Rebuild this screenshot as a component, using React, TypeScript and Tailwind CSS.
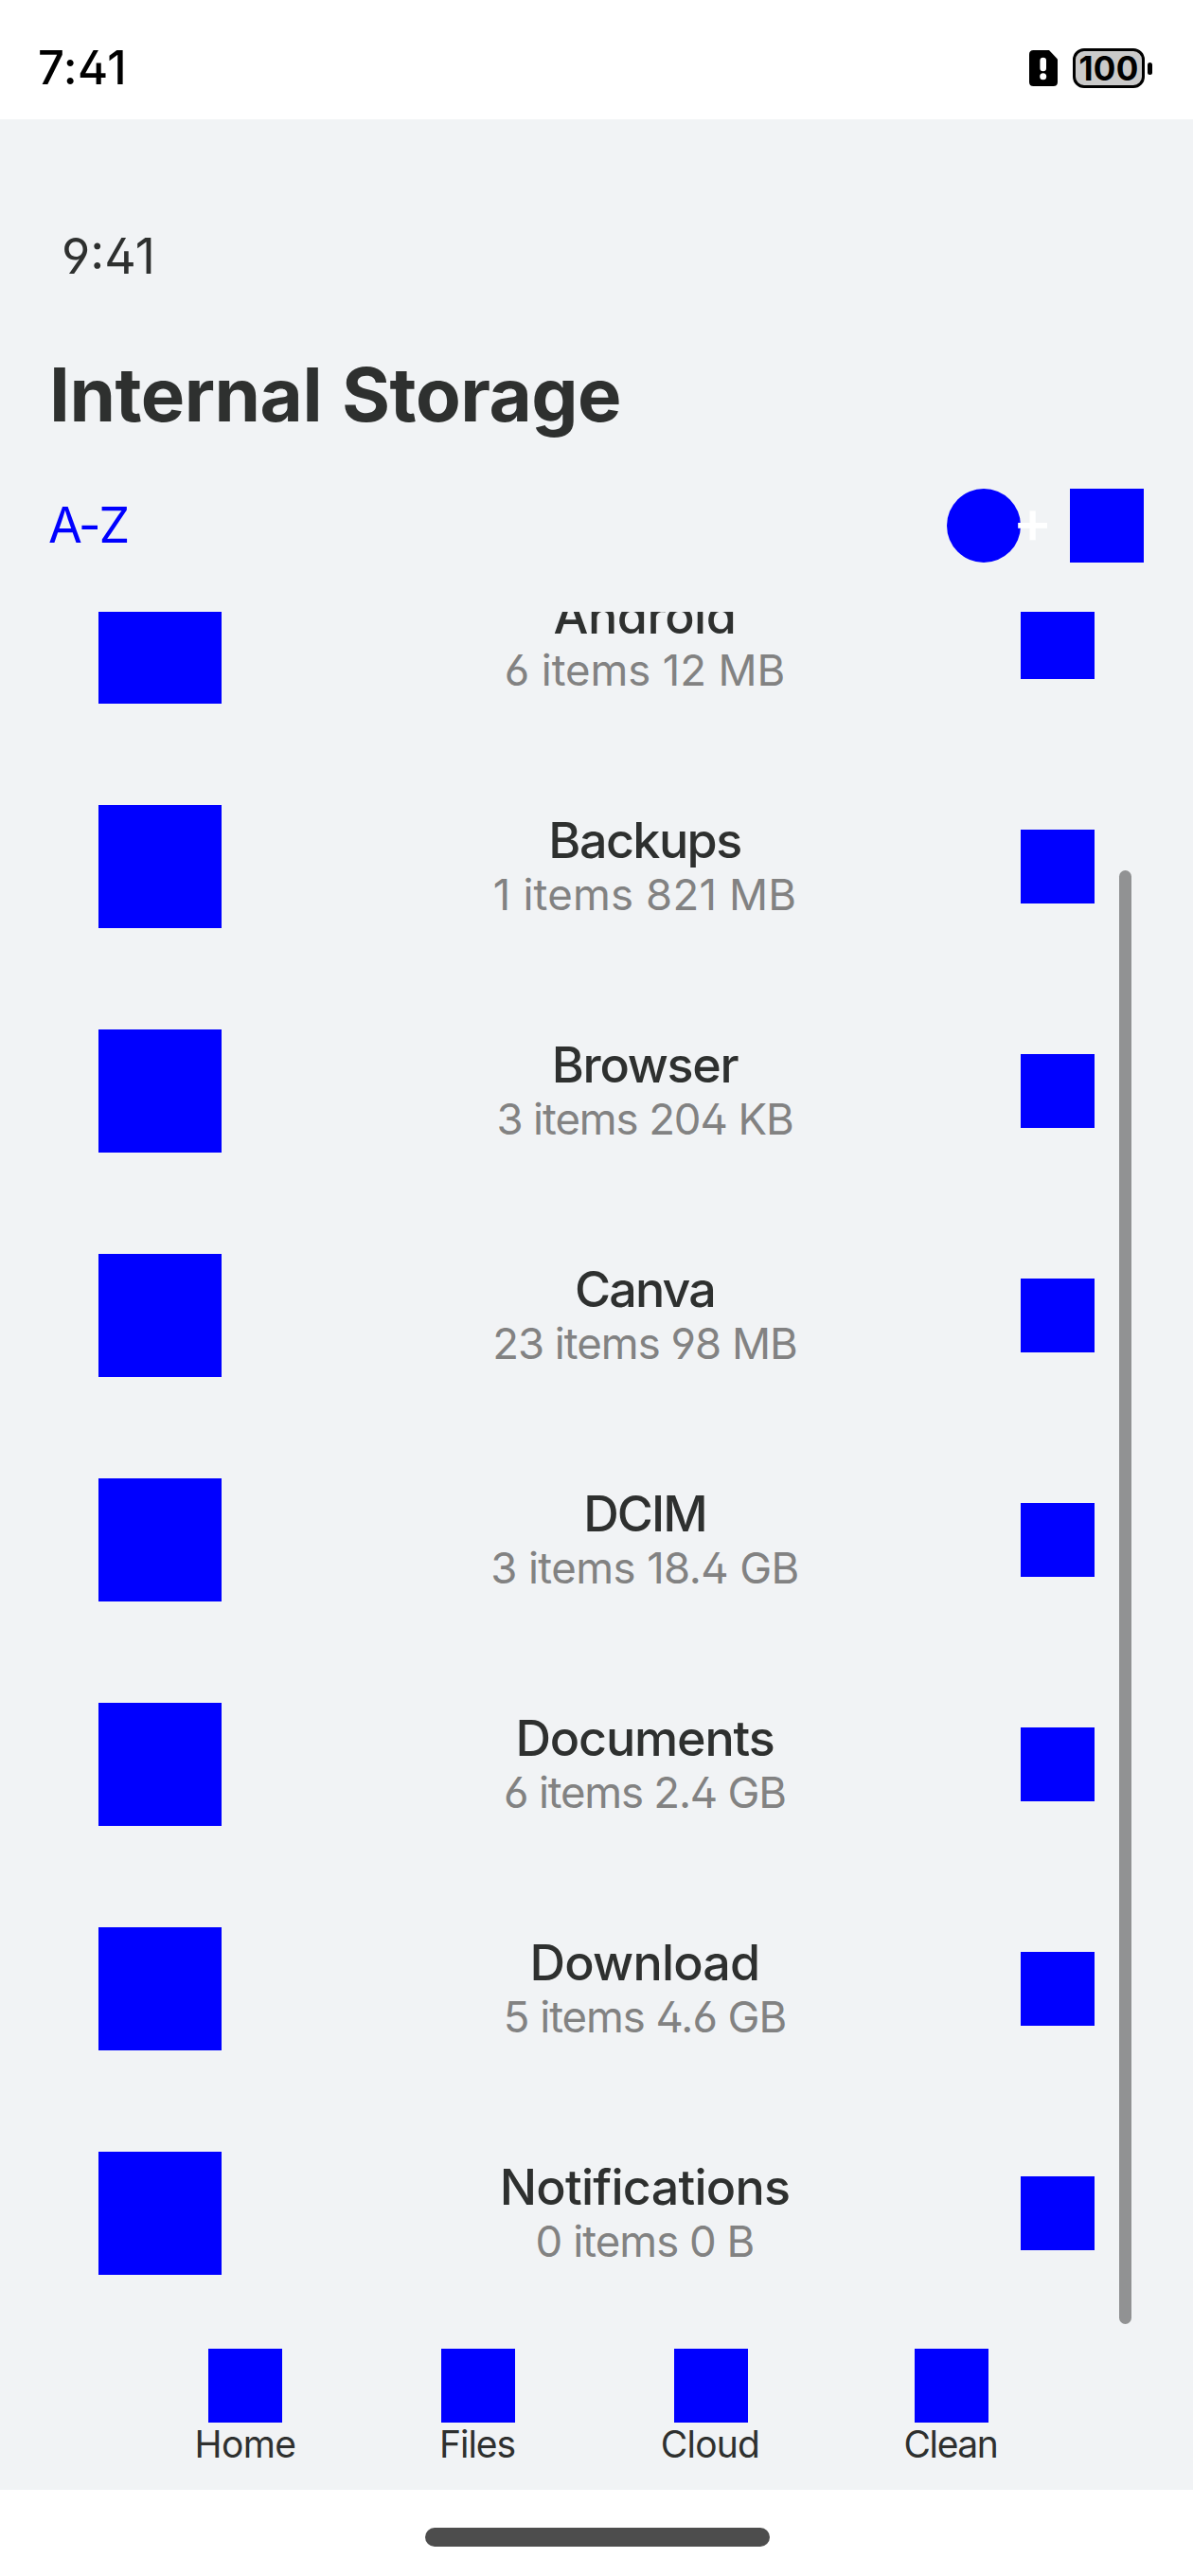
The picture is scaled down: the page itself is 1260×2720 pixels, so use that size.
type Entry = { name: string; nameFit: string; detail: string; detailFit: string };

const entries: Entry[] = [
  { name: "Android", nameFit: "tracking-[-0.45px]", detail: "6 items 12 MB", detailFit: "tracking-[-0.1px]" },
  { name: "Backups", nameFit: "tracking-[-1.55px]", detail: "1 items 821 MB", detailFit: "tracking-[0.18px]" },
  { name: "Browser", nameFit: "tracking-[-1.3px]", detail: "3 items 204 KB", detailFit: "tracking-[-1.1px]" },
  { name: "Canva", nameFit: "tracking-[-1.85px]", detail: "23 items 98 MB", detailFit: "tracking-[-1px]" },
  { name: "DCIM", nameFit: "tracking-[-1.9px]", detail: "3 items 18.4 GB", detailFit: "tracking-[-0.57px]" },
  { name: "Documents", nameFit: "tracking-[-1.15px]", detail: "6 items 2.4 GB", detailFit: "tracking-[-1.2px]" },
  { name: "Download", nameFit: "tracking-[-0.78px]", detail: "5 items 4.6 GB", detailFit: "tracking-[-1.05px]" },
  { name: "Notifications", nameFit: "tracking-[-0.72px]", detail: "0 items 0 B", detailFit: "tracking-[-0.97px]" },
];

const tabs = [
  { label: "Home", fit: "tracking-[-0.6px]", box: "ml-[204px] w-[110px]" },
  { label: "Files", fit: "tracking-[-1.07px] pr-[2px]", box: "ml-[146px] w-[90px]" },
  { label: "Cloud", fit: "tracking-[-0.78px] pr-[2px]", box: "ml-[146px] w-[110px]" },
  { label: "Clean", fit: "tracking-[-1.4px] pr-[2px]", box: "ml-[144px] w-[110px]" },
];

function StatusBar() {
  return (
    <header className="flex h-[126px] items-center bg-white pt-[18px] pl-[40px] text-black">
      <span className="w-[1047px] text-[49px] leading-[60px] font-medium tracking-[0.4px]">7:41</span>
      <svg className="h-[38px] w-[30px] shrink-0" viewBox="0 0 30 38">
        <path d="M4.5 0H21L30 9.5V33.5Q30 38 25.5 38H4.5Q0 38 0 33.5V4.5Q0 0 4.5 0Z" fill="#000" />
        <rect x="11.4" y="7.8" width="6.6" height="14.4" rx="3.3" fill="#fff" />
        <circle cx="14.7" cy="27.8" r="3.5" fill="#fff" />
      </svg>
      <div className="ml-[16px] flex h-[42px] w-[76px] items-center justify-center rounded-[12px] border-[3.5px] border-black bg-[#cacaca] text-[35px] leading-[35px] font-bold tracking-[0.3px]">
        100
      </div>
      <div className="ml-[3px] h-[13px] w-[5px] rounded-[2.5px] bg-black" />
    </header>
  );
}

function Row({ entry }: { entry: Entry }) {
  return (
    <li className="flex h-[237px] shrink-0 items-center px-[52px]">
      <div className="size-[130px] shrink-0 bg-[#0000ff]" />
      <div className="flex flex-1 flex-col items-center pb-[2px] pl-[50px] whitespace-nowrap">
        <span className={"text-[52px] leading-[61px] font-medium " + entry.nameFit}>{entry.name}</span>
        <span className={"text-[45.5px] leading-[53px] text-[#828282] " + entry.detailFit}>{entry.detail}</span>
      </div>
      <div className="size-[78px] shrink-0 bg-[#0000ff]" />
    </li>
  );
}

export default function App() {
  return (
    <div className="flex h-[2720px] w-[1260px] flex-col overflow-hidden bg-white font-['Inter',sans-serif] text-[#2e302f] [font-feature-settings:'cv02','cv03','cv04']">
      <StatusBar />
      <main className="flex h-[2503px] flex-col bg-[#f1f3f5]">
        <div className="mt-[114px] ml-[65px] text-[52px] leading-[61px]">9:41</div>
        <h1 className="mt-[70px] ml-[52px] text-[78px] leading-[92px] font-bold tracking-[-0.5px] [word-spacing:3px]">Internal Storage</h1>
        <div className="mt-[53px] flex h-[78px] items-center pr-[52px] pl-[51px]">
          <span className="flex-1 pb-[2px] text-[52px] leading-[61px] tracking-[-2.3px] text-[#0000ff]">A-Z</span>
          <div className="size-[78px] rounded-full bg-[#0000ff]" />
          <div className="z-10 flex w-[25px] justify-center pb-[10px] text-[64px] leading-[64px] font-medium text-white">+</div>
          <div className="ml-[27px] size-[78px] bg-[#0000ff]" />
        </div>
        <div className="relative mx-[52px] mt-[52px] h-[1811px] overflow-hidden">
          <ul className="flex h-full flex-col justify-end pb-[1.5px]">
            {entries.map((e) => (
              <Row key={e.name} entry={e} />
            ))}
          </ul>
          <div className="absolute top-[273px] right-[13px] h-[1535px] w-[13px] rounded-full bg-[#919293]" />
        </div>
        <nav className="mt-[23px] flex">
          {tabs.map((t) => (
            <div key={t.label} className={"flex shrink-0 flex-col items-center " + t.box}>
              <div className="size-[78px] bg-[#0000ff]" />
              <span className={"text-[39px] leading-[45px] " + t.fit}>{t.label}</span>
            </div>
          ))}
        </nav>
      </main>
      <footer className="flex flex-1 justify-center pt-[39.5px] pl-[2px]">
        <div className="h-[20px] w-[364px] rounded-full bg-[#4d4d4d]" />
      </footer>
    </div>
  );
}
